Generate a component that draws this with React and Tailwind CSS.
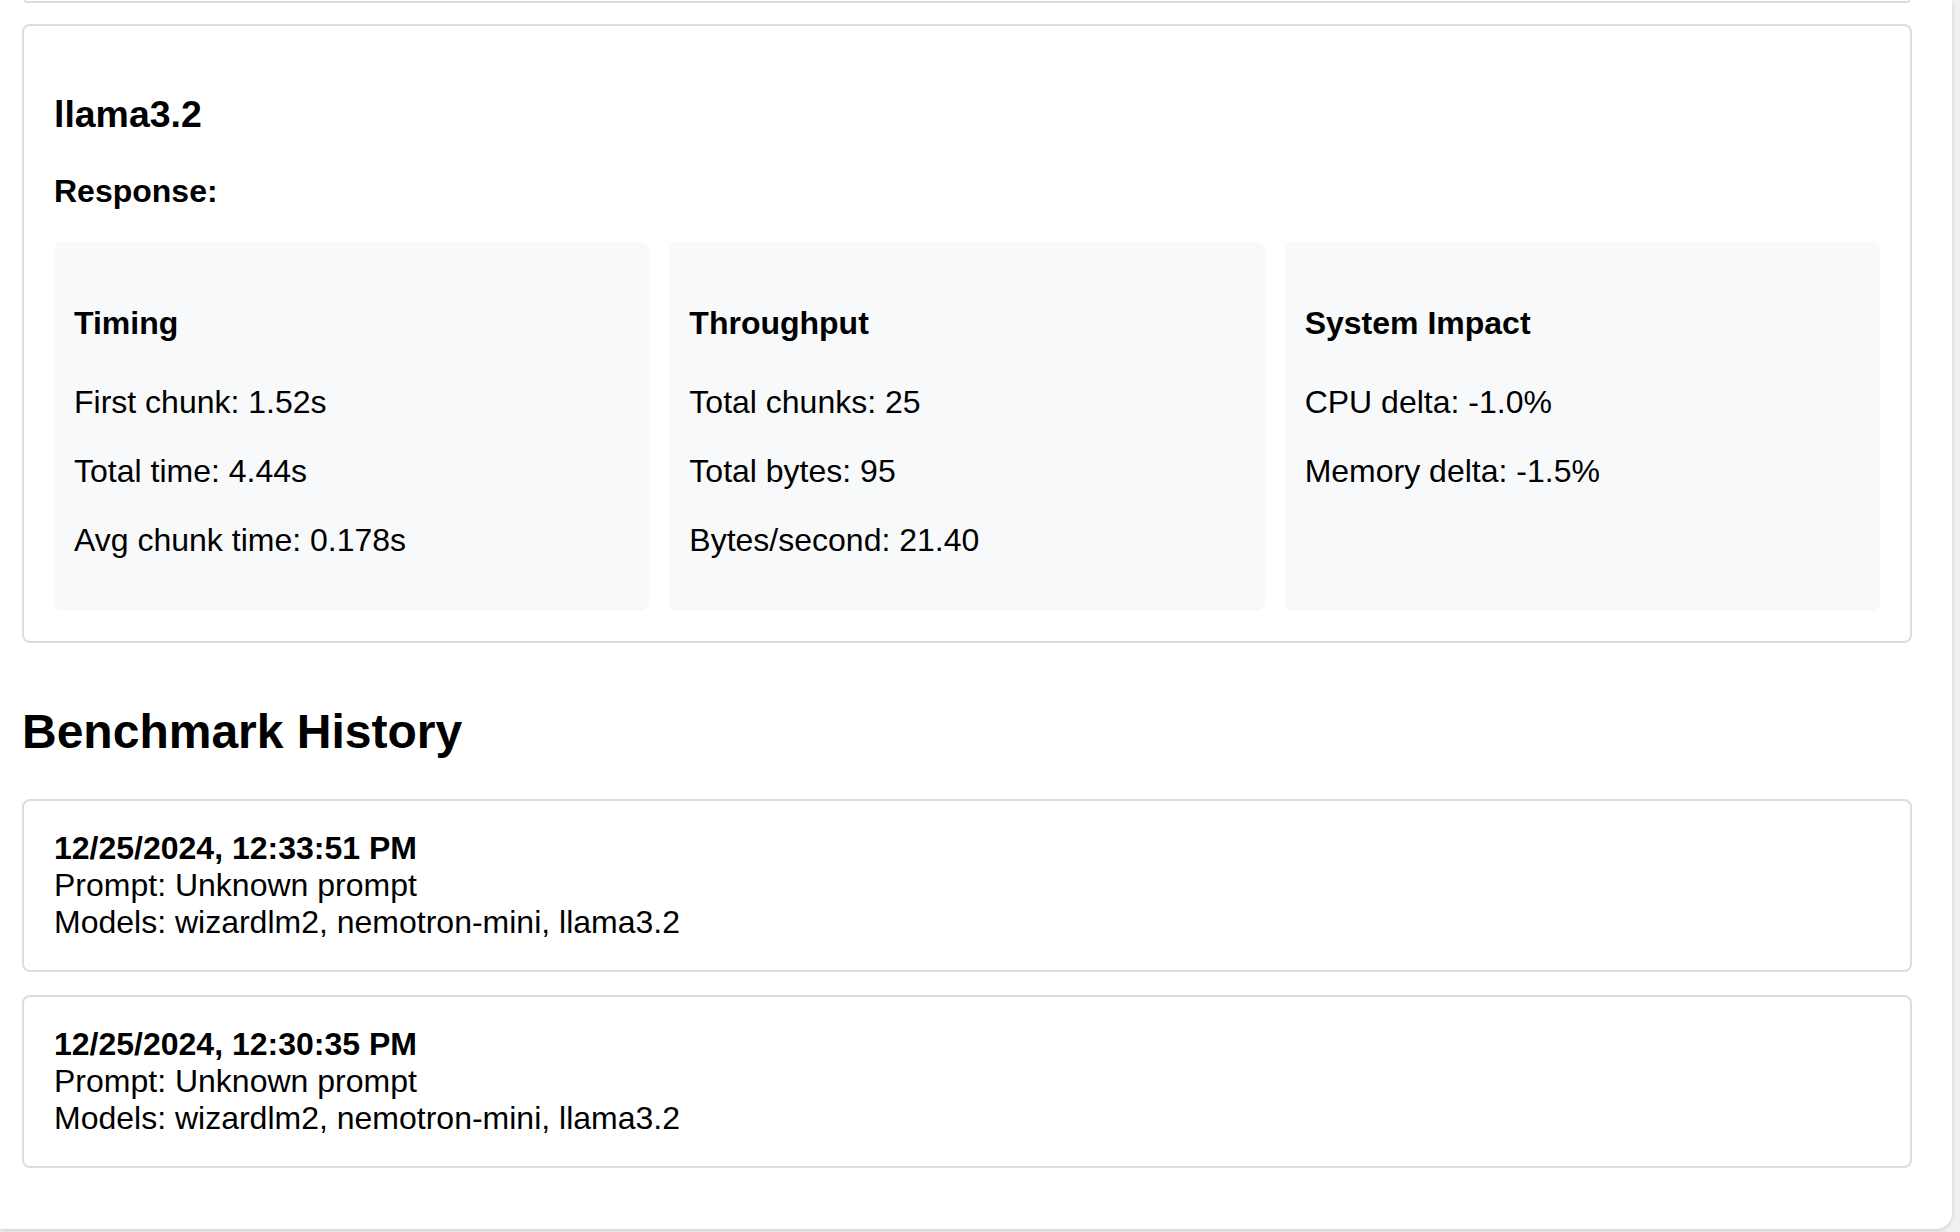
import React from 'react';

const metrics = [
  {
    title: 'Timing',
    rows: ['First chunk: 1.52s', 'Total time: 4.44s', 'Avg chunk time: 0.178s'],
  },
  {
    title: 'Throughput',
    rows: ['Total chunks: 25', 'Total bytes: 95', 'Bytes/second: 21.40'],
  },
  {
    title: 'System Impact',
    rows: ['CPU delta: -1.0%', 'Memory delta: -1.5%'],
  },
];

const history = [
  { date: '12/25/2024, 12:33:51 PM', prompt: 'Unknown prompt', models: 'wizardlm2, nemotron-mini, llama3.2' },
  { date: '12/25/2024, 12:30:35 PM', prompt: 'Unknown prompt', models: 'wizardlm2, nemotron-mini, llama3.2' },
];

function MetricCard({ title, rows }) {
  return (
    <div className="bg-[#f8f9fa] rounded-[8px] p-[20px]">
      <h4 className="mt-[43px] text-[32px] leading-[37px] font-bold">{title}</h4>
      {rows.map((row, i) => (
        <p
          key={row}
          className={`text-[32px] leading-[37px] ${i === 0 ? 'mt-[42px]' : 'mt-[32px]'} ${
            i === rows.length - 1 ? 'mb-[32px]' : ''
          }`}
        >
          {row}
        </p>
      ))}
    </div>
  );
}

export default function App() {
  return (
    <div className="h-[1232px] overflow-hidden bg-[#f0f0f0] font-['Liberation_Sans',Arial,sans-serif] text-black">
      <div className="w-[1952px] bg-white rounded-br-[16px] shadow-[0_2px_4px_rgba(0,0,0,0.12)] pl-[22px] pr-[40px] pb-[61px]">
        {/* end of the previous result card */}
        <div className="h-[3px] mx-[2px] border-2 border-t-0 border-[#ddd] rounded-b-[8px]" />

        {/* model result */}
        <div className="mt-[21px] border-2 border-[#ddd] rounded-[8px] p-[30px]">
          <h3 className="mt-[37px] text-[37.44px] leading-[43px] font-bold">llama3.2</h3>
          <p className="mt-[37px] text-[32px] leading-[37px] font-bold">Response:</p>
          <div className="mt-[32px] grid grid-cols-3 gap-[20px]">
            {metrics.map((m) => (
              <MetricCard key={m.title} title={m.title} rows={m.rows} />
            ))}
          </div>
        </div>

        <h2 className="mt-[61px] text-[48px] leading-[55px] font-bold">Benchmark History</h2>

        <div className="mt-[40px] flex flex-col gap-[23px]">
          {history.map((h) => (
            <div key={h.date} className="border-2 border-[#ddd] rounded-[8px] px-[30px] py-[29px] text-[32px] leading-[37px]">
              <div className="font-bold">{h.date}</div>
              <div>Prompt: {h.prompt}</div>
              <div>Models: {h.models}</div>
            </div>
          ))}
        </div>
      </div>
    </div>
  );
}
